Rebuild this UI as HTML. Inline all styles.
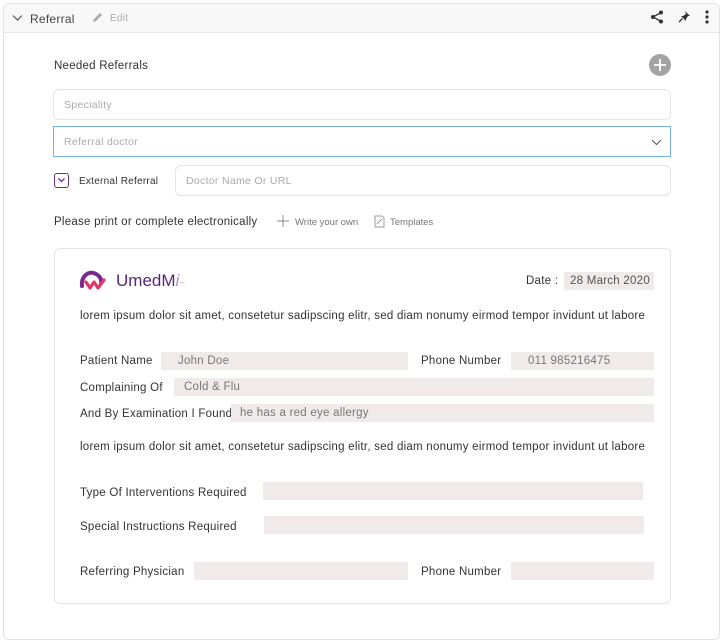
<!DOCTYPE html>
<html><head><meta charset="utf-8"><style>
*{box-sizing:border-box;margin:0;padding:0}
body{width:722px;height:643px;background:#fff;font-family:"Liberation Sans",sans-serif;color:#333;position:relative;overflow:hidden}
.a{position:absolute}
.card{left:3px;top:3px;width:717px;height:637px;border:1px solid #e2e2e2;border-radius:6px}
.hdr{left:4px;top:4px;width:715px;height:29px;background:#f8f8f8;border-bottom:1px solid #e6e6e6;border-radius:6px 6px 0 0}
.inp{border:1px solid #e4e4e4;border-radius:6px;height:31px;font-size:10.5px;color:#aaa;padding-left:10px;line-height:31px;letter-spacing:.3px}
.t{font-size:11.5px;color:#333;white-space:nowrap;letter-spacing:.25px}
.f{background:#f1eaea;height:18px;font-size:11.5px;color:#777;line-height:19px;letter-spacing:.25px}
</style></head><body>
<div class="a card"></div>
<div class="a hdr"></div>
<svg class="a" style="left:12px;top:14px" width="11" height="8"><path d="M1 1.5L5.5 6 10 1.5" stroke="#555" fill="none" stroke-width="1.2"/></svg>
<div class="a t" style="left:30px;top:12px;font-size:12px;color:#444">Referral</div>
<svg class="a" style="left:91px;top:12px" width="12" height="12"><path d="M2 10l1-3 6-6 2 2-6 6z" fill="#aaa"/></svg>
<div class="a t" style="left:110px;top:13px;font-size:10px;color:#aaa">Edit</div>
<svg class="a" style="left:650px;top:10px" width="14" height="14"><circle cx="11" cy="2.5" r="2" fill="#333"/><circle cx="3" cy="7" r="2" fill="#333"/><circle cx="11" cy="11.5" r="2" fill="#333"/><path d="M11 2.5L3 7l8 4.5" stroke="#333" fill="none" stroke-width="1.3"/></svg>
<svg class="a" style="left:678px;top:10px" width="13" height="14"><path d="M7 1l5 5-2 0-2 3 0 2-5-5 2 0 3-2z" fill="#333"/><path d="M4.5 8.5L1 12" stroke="#333" stroke-width="1.3"/></svg>
<svg class="a" style="left:704px;top:9px" width="6" height="16"><circle cx="3" cy="3" r="1.6" fill="#333"/><circle cx="3" cy="8" r="1.6" fill="#333"/><circle cx="3" cy="13" r="1.6" fill="#333"/></svg>

<div class="a t" style="left:54px;top:60px">Needed Referrals</div>
<svg class="a" style="left:649px;top:54px" width="22" height="22"><circle cx="11" cy="11" r="11" fill="#a3a3a3"/><path d="M11 5v12M5 11h12" stroke="#fff" stroke-width="1.8"/></svg>
<div class="a inp" style="left:53px;top:89px;width:618px">Speciality</div>
<div class="a inp" style="left:53px;top:126px;width:618px;border:1.5px solid #74aef0;border-radius:0">Referral doctor</div>
<svg class="a" style="left:651px;top:139px" width="11" height="7"><path d="M1 1l4.5 4.5L10 1" stroke="#555" fill="none"/></svg>
<div class="a" style="left:54px;top:173px;width:15px;height:15px;border:1.5px solid #6a2f80;border-radius:3px"></div>
<svg class="a" style="left:57px;top:177px" width="9" height="7"><path d="M1.5 1.5l3 3 3-3" stroke="#6a2f80" fill="none" stroke-width="1.3"/></svg>
<div class="a t" style="left:79px;top:176px;font-size:10px">External Referral</div>
<div class="a inp" style="left:175px;top:165px;width:496px">Doctor Name Or URL</div>

<div class="a t" style="left:54px;top:216px">Please print or complete electronically</div>
<svg class="a" style="left:277px;top:215px" width="12" height="12"><path d="M6 0v12M0 6h12" stroke="#888" stroke-width="1"/></svg>
<div class="a t" style="left:295px;top:217px;font-size:9.5px;color:#777;letter-spacing:0">Write your own</div>
<svg class="a" style="left:374px;top:215px" width="12" height="13"><path d="M1 1h7l2 2v9H1z" fill="none" stroke="#999"/><path d="M3 9l5-5" stroke="#999"/></svg>
<div class="a t" style="left:390px;top:217px;font-size:9.5px;color:#777;letter-spacing:0">Templates</div>

<div class="a" style="left:54px;top:248px;width:617px;height:356px;border:1px solid #e3e3e3;border-radius:6px"></div>
<svg class="a" style="left:79px;top:268px" width="28" height="24"><path d="M3 18C2 8 10 2 17 6c4 2 6 6 5 9" stroke="#7a2a8c" stroke-width="4" fill="none" stroke-linecap="round"/><path d="M7 14l4 6 4-6 4 6 6-8" stroke="#e0356d" stroke-width="3.2" fill="none" stroke-linecap="round" stroke-linejoin="round"/></svg>
<div class="a t" style="left:116px;top:271px;font-size:17px;color:#5b2675;letter-spacing:0">UmedM<i style="color:#b58ac4">i</i><span style="color:#c9a8d5;font-size:10px">~</span></div>
<div class="a t" style="left:526px;top:275px">Date :</div>
<div class="a f" style="left:564px;top:272px;width:90px;padding-left:6px;color:#555">28 March 2020</div>
<div class="a t" style="left:80px;top:310px">lorem ipsum dolor sit amet, consetetur sadipscing elitr, sed diam nonumy eirmod tempor invidunt ut labore</div>
<div class="a t" style="left:80px;top:355px">Patient Name</div>
<div class="a f" style="left:161px;top:352px;width:247px;padding-left:17px">John Doe</div>
<div class="a t" style="left:421px;top:355px">Phone Number</div>
<div class="a f" style="left:511px;top:352px;width:143px;padding-left:17px">011 985216475</div>
<div class="a t" style="left:80px;top:382px">Complaining Of</div>
<div class="a f" style="left:174px;top:378px;width:480px;padding-left:10px">Cold &amp; Flu</div>
<div class="a t" style="left:80px;top:408px">And By Examination I Found</div>
<div class="a f" style="left:231px;top:404px;width:423px;padding-left:9px">he has a red eye allergy</div>
<div class="a t" style="left:80px;top:441px">lorem ipsum dolor sit amet, consetetur sadipscing elitr, sed diam nonumy eirmod tempor invidunt ut labore</div>
<div class="a t" style="left:80px;top:487px">Type Of Interventions Required</div>
<div class="a f" style="left:263px;top:482px;width:380px"></div>
<div class="a t" style="left:80px;top:521px">Special Instructions Required</div>
<div class="a f" style="left:264px;top:516px;width:380px"></div>
<div class="a t" style="left:80px;top:566px">Referring Physician</div>
<div class="a f" style="left:194px;top:562px;width:214px"></div>
<div class="a t" style="left:421px;top:566px">Phone Number</div>
<div class="a f" style="left:511px;top:562px;width:143px"></div>
</body></html>
